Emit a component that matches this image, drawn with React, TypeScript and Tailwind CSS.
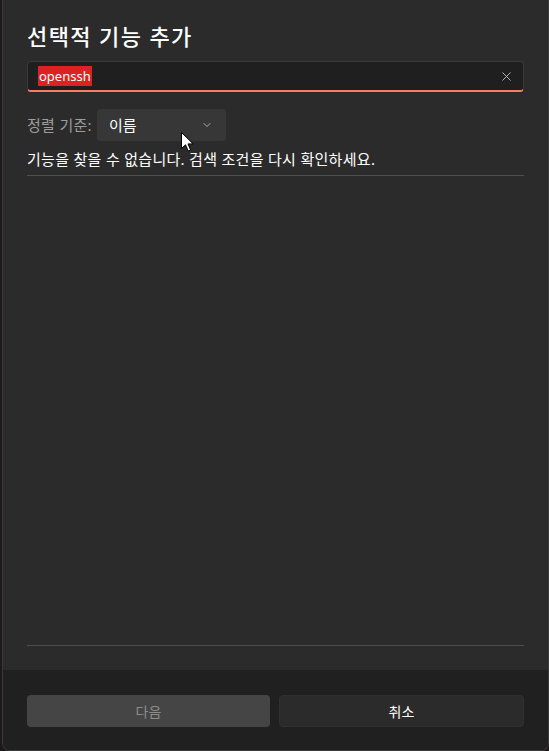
import { X, ChevronDown } from "lucide-react";

const font = {
  fontFamily: '"Noto Sans", "Noto Sans CJK KR", sans-serif',
};

function Cursor() {
  return (
    <svg
      className="absolute left-[181px] top-[132px]"
      width="13"
      height="20"
      viewBox="0 0 13 20"
    >
      <path
        d="M0.5 0.5 L0.5 16.5 L4.5 12.8 L7.2 19 L9.6 18 L7 11.9 L12.2 11.9 Z"
        fill="#ffffff"
        stroke="#000000"
        strokeWidth="1"
        strokeLinejoin="miter"
      />
    </svg>
  );
}

export default function App() {
  return (
    <div
      className="relative flex h-[751px] w-[549px] overflow-hidden bg-[#1e1a1a]"
      style={font}
    >
      <div className="ml-[2px] flex flex-1 flex-col overflow-hidden rounded-b-[8px] border-x border-b border-[#3a3a3a]">
        {/* Body */}
        <div className="flex flex-1 flex-col bg-[#2b2b2b] px-[24px] pt-[21px]">
          <h1 className="h-[30px] text-[22px] font-medium leading-[30px] tracking-[1.4px] text-white">
            선택적 기능 추가
          </h1>

          {/* Search box */}
          <div className="mt-[10px] flex h-[31px] items-center rounded-[4px] border border-b-2 border-[#3a3a3a] border-b-[#f0806a] bg-[#1f1f1f] pl-[10px] pr-[9px]">
            <span className="bg-[#dc2222] px-[1px] text-[13px] leading-[20px] text-white">
              openssh
            </span>
            <div className="flex-1" />
            <X className="size-[15px] text-[#c8c8c8]" strokeWidth={1.4} />
          </div>

          {/* Sort row */}
          <div className="mt-[17px] flex items-center gap-[5px]">
            <span className="text-[15px] tracking-[0.3px] text-[#9d9d9d]">
              정렬 기준:
            </span>
            <div className="flex h-[32px] w-[129px] items-center justify-between rounded-[4px] bg-[#373737] pl-[12px] pr-[13px]">
              <span className="text-[15px] text-white">이름</span>
              <ChevronDown className="size-[12px] text-[#c8c8c8]" strokeWidth={1.6} />
            </div>
          </div>

          <p className="mt-[8px] text-[15px] leading-[20px] tracking-[0.3px] text-white">
            기능을 찾을 수 없습니다. 검색 조건을 다시 확인하세요.
          </p>
          <div className="mt-[6px] h-px bg-[#4f4f4f]" />

          <div className="flex-1" />
          <div className="mb-[24px] h-px bg-[#4f4f4f]" />
        </div>

        {/* Footer */}
        <div className="flex h-[80px] gap-[9px] bg-[#202020] px-[24px] pt-[25px]">
          <button className="h-[32px] flex-1 rounded-[4px] bg-[#454545] text-[14px] text-[#8c8c8c]">
            다음
          </button>
          <button className="h-[32px] flex-1 rounded-[4px] border border-[#303030] bg-[#2b2b2b] text-[14px] text-white">
            취소
          </button>
        </div>
      </div>
      <Cursor />
    </div>
  );
}
